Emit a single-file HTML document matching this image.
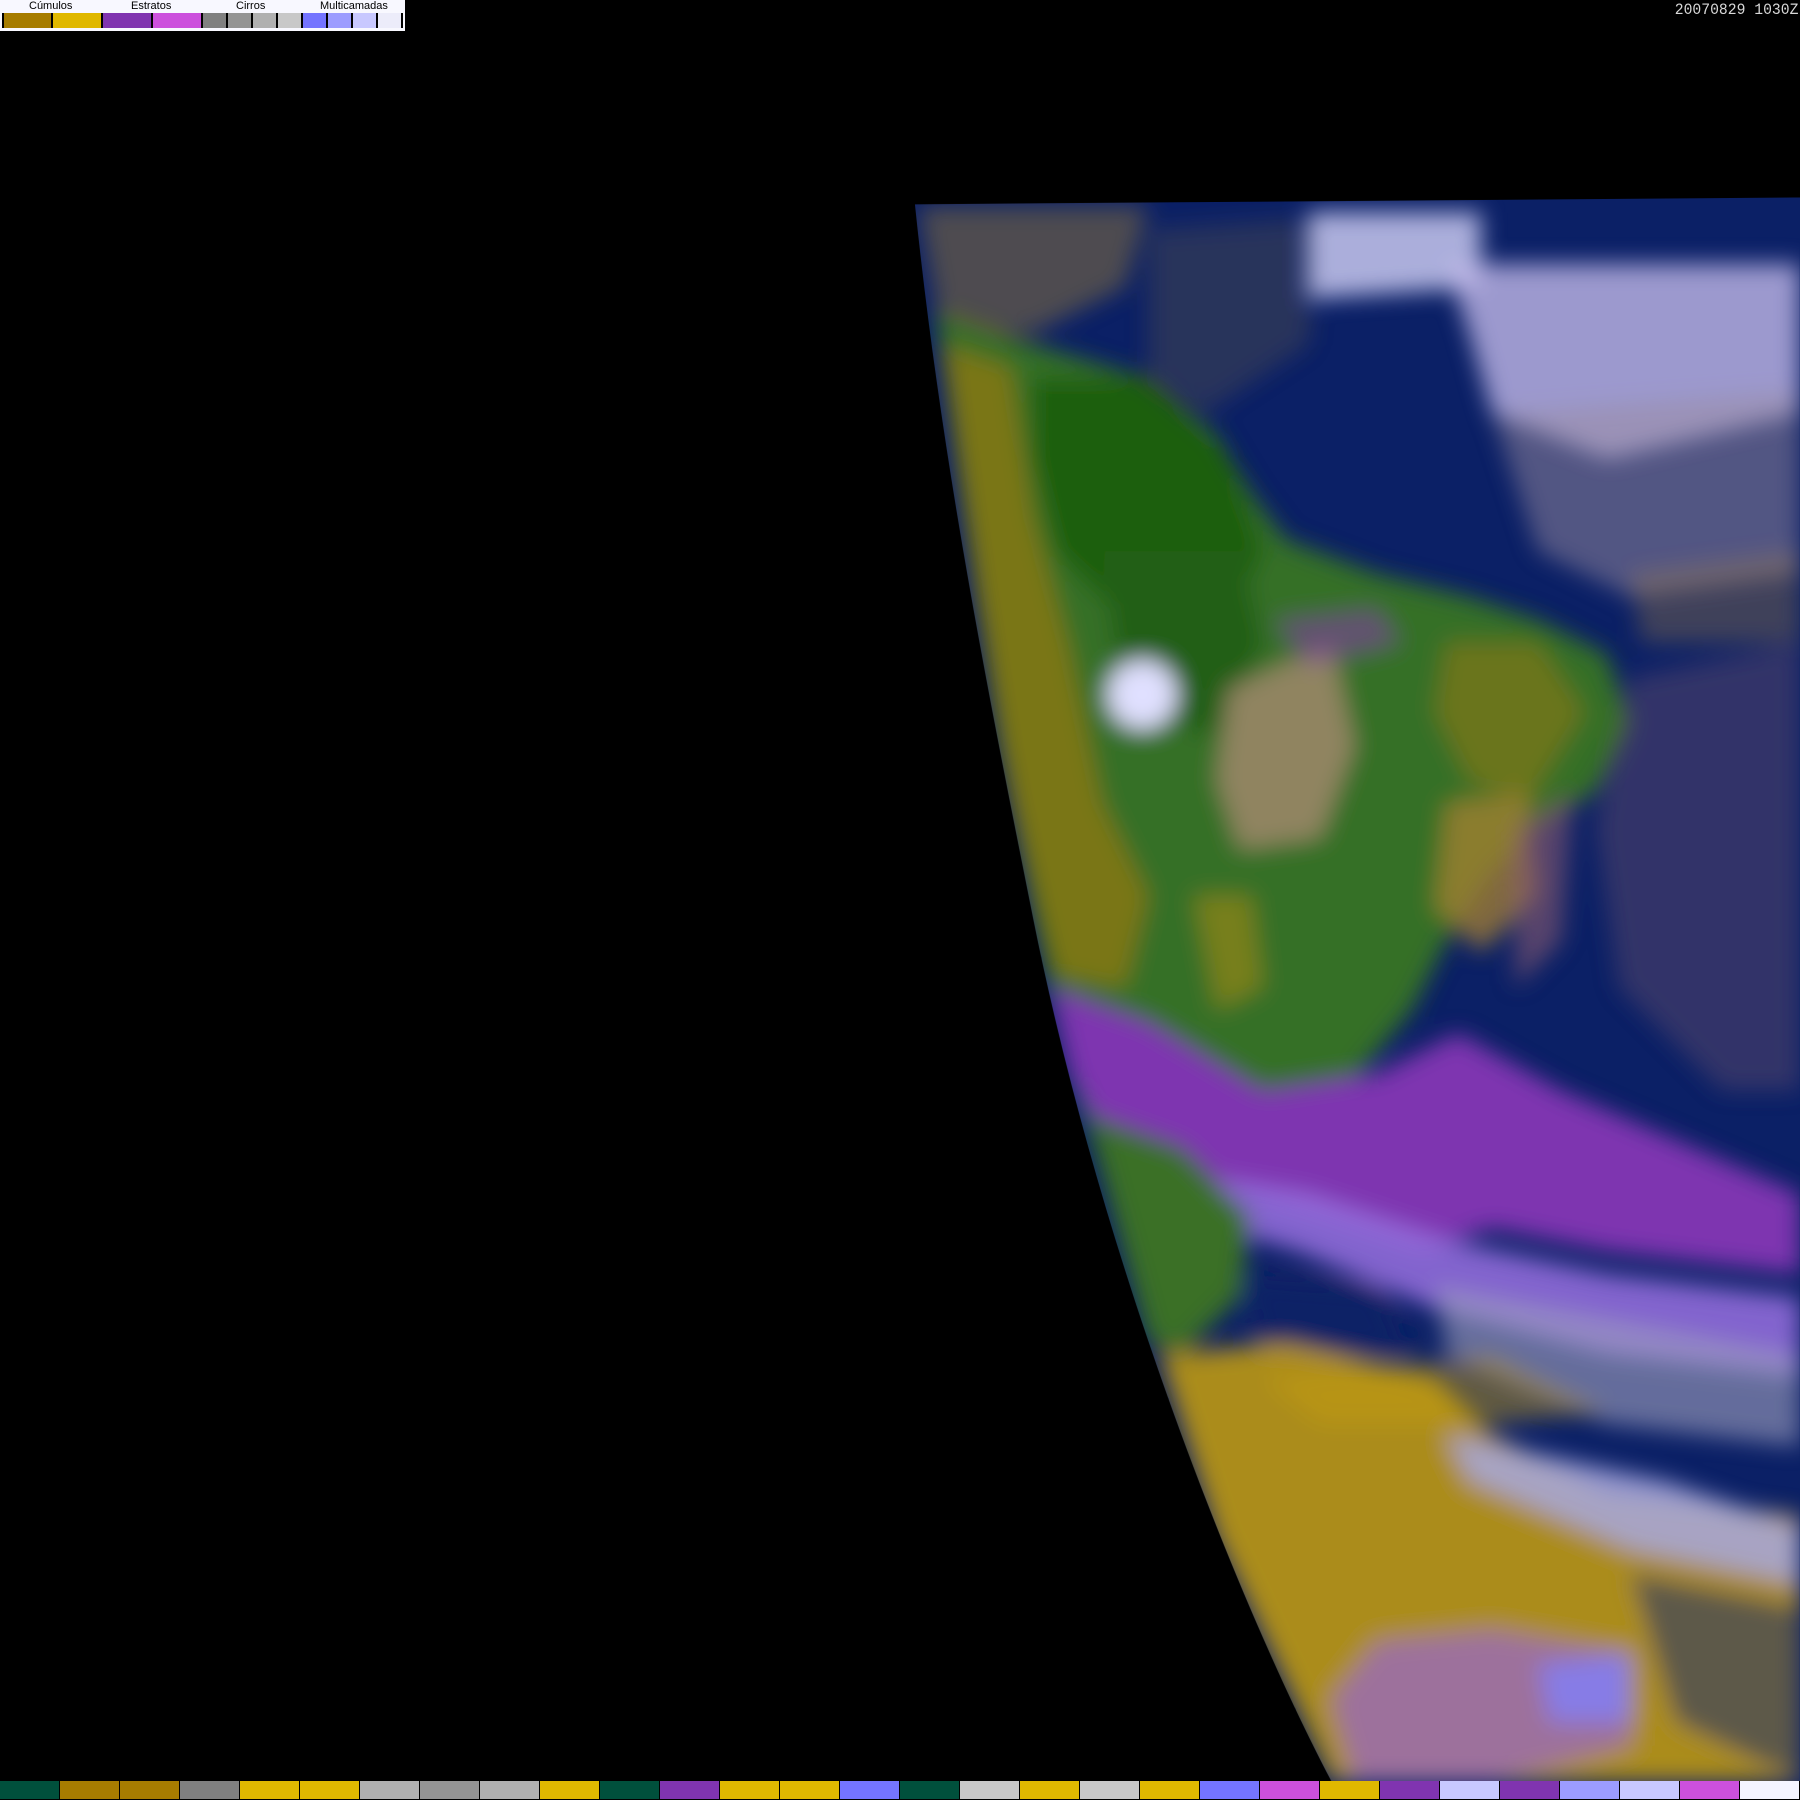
<!DOCTYPE html>
<html><head><meta charset="utf-8"><style>
html,body{margin:0;padding:0;background:#000;width:1800px;height:1800px;overflow:hidden;position:relative}
svg{position:absolute;left:0;top:0}
#leg{position:absolute;left:0;top:0;width:405px;height:31px;background:#f8f8ff}
#leg .lab{position:absolute;top:0;font:11px "Liberation Sans",sans-serif;color:#000}
#leg .sw{position:absolute;top:13px;height:15px;border-right:2px solid #000;box-sizing:border-box}
#date{position:absolute;right:2px;top:1px;font:16px "Liberation Mono",monospace;color:#d8d8d8;transform:scaleX(0.92);transform-origin:right top}
#bar{position:absolute;left:0;top:1781px;height:18px;width:1800px;display:flex}
#bar div{width:60px;height:18px;box-sizing:border-box;border-right:1px solid #000}
</style></head><body>
<svg width="1800" height="1800" viewBox="0 0 1568 1568">
<defs>
<clipPath id="disc"><path d="M797,178 L1568,172 L1568,1552 L1160,1552 C1080,1400 960,1100 900,800 C860,600 820,400 797,178Z"/></clipPath>
<filter id="b2"><feGaussianBlur stdDeviation="10"/></filter>
</defs>
<g clip-path="url(#disc)">
<rect x="780" y="160" width="800" height="1400" fill="#0b2066"/>
<g filter="url(#b2)">
<path d="M800,180 L1000,180 L980,250 L900,290 L820,290Z" fill="#a08030" opacity=".45"/>
<path d="M1000,200 L1150,190 L1140,300 L1050,360 L1000,330Z" fill="#806a40" opacity=".25"/>
<path d="M1140,185 L1290,185 L1290,250 L1140,260Z" fill="#c8c8f0" opacity=".85"/>
<path d="M1260,230 L1568,230 L1568,360 L1400,400 L1300,360 L1280,290Z" fill="#c0b8e8" opacity=".8"/>
<path d="M1300,360 L1568,340 L1568,500 L1420,520 L1340,480Z" fill="#9a8ca0" opacity=".5"/>
<path d="M1420,500 L1568,480 L1568,560 L1430,560Z" fill="#b89040" opacity=".3"/>
<path d="M815,270 L900,300 L1000,330 L1060,380 L1090,430 L1120,470 L1200,500 L1280,520 L1340,540 L1400,570 L1420,630 L1390,690 L1340,720 L1300,760 L1260,820 L1230,880 L1180,940 L1160,980 L1100,990 L1040,1030 L1000,1050 L960,1020 L930,930 L900,800 L870,650 L840,450Z" fill="#366f26"/>
<path d="M900,330 L1000,330 L1070,400 L1100,480 L1060,560 L1000,560 L920,480 L900,400Z" fill="#1f5f10"/>
<path d="M960,480 L1080,480 L1100,560 L1060,640 L980,620Z" fill="#235f12"/>
<path d="M820,300 L880,320 L900,450 L930,560 L960,700 L1000,780 L980,860 L920,850 L880,700 L850,520Z" fill="#a07a10" opacity=".65"/>
<path d="M1040,780 L1090,780 L1100,860 L1060,880Z" fill="#b89010" opacity=".5"/>
<path d="M1070,600 L1160,560 L1180,650 L1150,730 L1080,740 L1060,680Z" fill="#a88a70" opacity=".8"/>
<path d="M1110,540 L1200,530 L1220,560 L1140,580Z" fill="#8040a0" opacity=".6"/>
<path d="M1260,560 L1340,560 L1380,620 L1330,700 L1280,680 L1250,620Z" fill="#a07a10" opacity=".5"/>
<path d="M1260,700 L1330,690 L1340,780 L1290,830 L1250,790Z" fill="#a88230" opacity=".75"/>
<path d="M1320,720 L1370,690 L1360,820 L1320,860Z" fill="#8a5a70" opacity=".6"/>
<path d="M1420,590 L1568,560 L1568,950 L1500,950 L1410,860 L1390,720Z" fill="#7a5a70" opacity=".35"/>
<circle cx="995" cy="605" r="30" fill="#e0e0ff"/>
<path d="M915,860 L1000,890 L1100,950 L1200,935 L1270,900 L1360,950 L1568,1040 L1568,1110 L1400,1090 L1300,1070 L1240,1090 L1150,1060 L1050,1030 L960,990 L930,930Z" fill="#7e36b0"/>
<path d="M1020,1020 L1140,1040 L1260,1080 L1400,1110 L1568,1130 L1568,1200 L1400,1180 L1250,1140 L1130,1090 L1030,1060Z" fill="#9870e0" opacity=".85"/>
<path d="M1250,1120 L1568,1180 L1568,1260 L1400,1240 L1260,1180Z" fill="#a0a0c0" opacity=".6"/>
<path d="M945,970 L1030,1000 L1090,1060 L1080,1130 L1030,1180 L1000,1170 L970,1060Z" fill="#3a7028"/>
<path d="M1080,1110 L1200,1120 L1230,1180 L1100,1180Z" fill="#0b2066"/>
<path d="M1010,1180 L1120,1170 L1250,1200 L1300,1250 L1400,1300 L1568,1320 L1568,1552 L1160,1552 L1060,1340Z" fill="#c8a010" opacity=".85"/>
<path d="M1100,1200 L1300,1180 L1400,1230 L1300,1240 L1150,1240Z" fill="#c8a010" opacity=".45"/>
<path d="M1260,1250 L1450,1290 L1568,1330 L1568,1380 L1420,1350 L1280,1290Z" fill="#a8a8e0" opacity=".85"/>
<path d="M1420,1370 L1568,1400 L1568,1552 L1460,1500Z" fill="#1e3070" opacity=".55"/>
<path d="M1200,1430 L1300,1420 L1420,1440 L1420,1520 L1300,1552 L1180,1552 L1160,1480Z" fill="#9868c8" opacity=".75"/>
<path d="M1340,1450 L1420,1440 L1420,1500 L1350,1500Z" fill="#8080ff" opacity=".75"/>
</g>
</g>
</svg>
<div id="leg">
<span class="lab" style="left:29px">Cúmulos</span>
<span class="lab" style="left:131px">Estratos</span>
<span class="lab" style="left:236px">Cirros</span>
<span class="lab" style="left:320px">Multicamadas</span>
<div class="sw" style="left:2px;width:51px;background:#a67c00;border-left:2px solid #000"></div>
<div class="sw" style="left:53px;width:50px;background:#e0b800"></div>
<div class="sw" style="left:103px;width:50px;background:#8034b0"></div>
<div class="sw" style="left:153px;width:50px;background:#cc50dd"></div>
<div class="sw" style="left:203px;width:25px;background:#808080"></div>
<div class="sw" style="left:228px;width:25px;background:#949494"></div>
<div class="sw" style="left:253px;width:25px;background:#b0b0b0"></div>
<div class="sw" style="left:278px;width:25px;background:#c8c8c8"></div>
<div class="sw" style="left:303px;width:25px;background:#7474ff"></div>
<div class="sw" style="left:328px;width:25px;background:#9c9cff"></div>
<div class="sw" style="left:353px;width:25px;background:#c8c8ff"></div>
<div class="sw" style="left:378px;width:25px;background:#ececfa"></div>
</div>
<div id="date">20070829 1030Z</div>
<div id="bar">
<div style="background:#00503c"></div><div style="background:#a67c00"></div><div style="background:#a67c00"></div><div style="background:#808080"></div><div style="background:#e0b800"></div><div style="background:#e0b800"></div><div style="background:#b0b0b0"></div><div style="background:#949494"></div><div style="background:#b0b0b0"></div><div style="background:#e0b800"></div><div style="background:#00503c"></div><div style="background:#8034b0"></div><div style="background:#e0b800"></div><div style="background:#e0b800"></div><div style="background:#7474ff"></div><div style="background:#00503c"></div><div style="background:#c8c8c8"></div><div style="background:#e0b800"></div><div style="background:#c8c8c8"></div><div style="background:#e0b800"></div><div style="background:#7474ff"></div><div style="background:#cc50dd"></div><div style="background:#e0b800"></div><div style="background:#8034b0"></div><div style="background:#c8c8ff"></div><div style="background:#8034b0"></div><div style="background:#9c9cff"></div><div style="background:#c8c8ff"></div><div style="background:#cc50dd"></div><div style="background:#f4f4ff"></div>
</div>
</body></html>
